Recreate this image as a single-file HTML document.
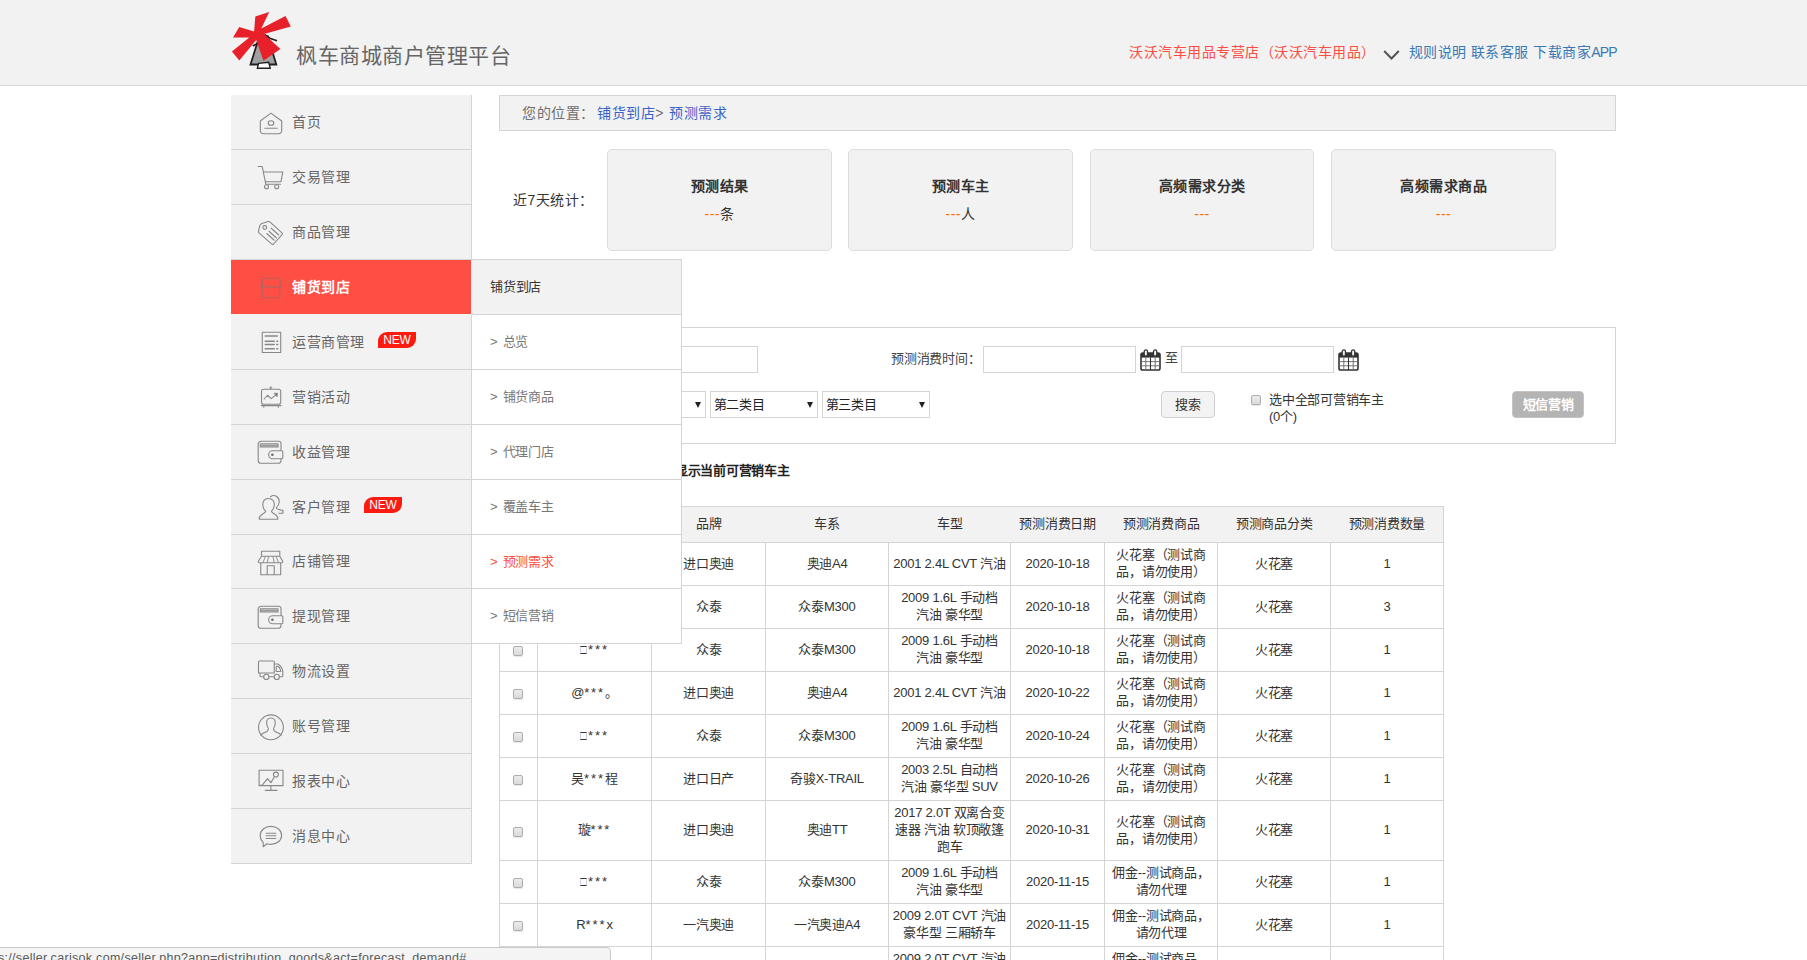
<!DOCTYPE html>
<html lang="zh-CN">
<head>
<meta charset="utf-8">
<title>枫车商城商户管理平台</title>
<style>
*{box-sizing:border-box;margin:0;padding:0}
html,body{width:1807px;height:960px;overflow:hidden;background:#fff}
body{font-family:"Liberation Sans",sans-serif;font-size:13px;letter-spacing:-.25px;color:#333;position:relative}
.abs{position:absolute}
/* header */
#hd{left:0;top:0;width:1807px;height:86px;background:#f2f2f2;border-bottom:1px solid #d5d5d5}
#logo{left:231px;top:10px;width:62px;height:62px}
#title{left:296px;top:41px;font-size:21px;line-height:30px;color:#666;letter-spacing:.5px;white-space:nowrap}
#shop{left:1129px;top:42px;font-size:14px;letter-spacing:.5px;line-height:20px;color:#ff4d42;white-space:nowrap}
#chev{left:1383px;top:48.500px;width:17px;height:12px}
#links{left:1408.500px;top:42px;font-size:14px;letter-spacing:.5px;line-height:20px;color:#3a78b5;white-space:nowrap}
#links i{font-style:normal;letter-spacing:-.9px}
/* sidebar */
#side{left:231px;top:95px;width:241px;border-right:1px solid #d5d5d5;background:#f2f2f2}
.mi{position:relative;height:55px;border-bottom:1px solid #d5d5d5;font-size:14px;letter-spacing:.5px;line-height:54px;color:#666;padding-left:61px;white-space:nowrap}
.mi.s54{height:54px;line-height:53px}
.mi svg.ic{position:absolute;left:25px;top:13px;width:30px;height:30px;overflow:visible}
.mi.on{background:#ff4e44;color:#fff;font-weight:bold;border-bottom-color:#f2f2f2}
.new{position:absolute;top:17px;width:38px;height:16px;background:#fc1b10;color:#fff;border-radius:9px 0 9px 0;font-size:12px;line-height:16px;text-align:center;font-weight:normal;letter-spacing:-.2px;padding-left:0}
/* submenu */
#sub{left:471px;top:259px;width:211px;border:1px solid #d5d5d5;background:#fff;font-size:13px;word-spacing:2px}
#sub div{height:55px;line-height:54px;border-bottom:1px solid #d5d5d5;padding-left:18px;color:#777;white-space:nowrap}
#sub div.h{background:#f2f2f2;color:#333;height:55px;margin-left:-1px;padding-left:19px}
#sub div.on{color:#ff4d42}
#sub div.s54{height:54px;line-height:53px}
#sub div:last-child{border-bottom:0;height:54px}
/* main */
#bc{left:499px;top:95px;width:1117px;height:36px;border:1px solid #d5d5d5;background:#f2f2f2;line-height:34px;padding-left:22px;font-size:14px;letter-spacing:.5px;color:#6e6e6e;white-space:nowrap}
#bc b{font-weight:normal;color:#3b62c8}
#bc u{text-decoration:none;display:inline-block;width:4.500px}
#stl{left:513px;top:190px;font-size:14px;letter-spacing:.5px;line-height:20px;color:#333;white-space:nowrap}
.card{position:absolute;top:149px;width:225px;height:102px;border:1px solid #dcdcdc;border-radius:5px;background:#f2f2f2;text-align:center;font-size:14px;letter-spacing:.5px}
.card .t{margin-top:26px;line-height:20px;font-weight:bold;color:#333}
.card .v{margin-top:8px;line-height:20px;color:#333}
.card .v i{font-style:normal;color:#ff6a00}
#flt{left:499px;top:327px;width:1117px;height:117px;border:1px solid #d5d5d5;background:#fff}
.inp{position:absolute;height:27px;border:1px solid #d4d4d4;background:#fff}
.sel{position:absolute;height:27px;border:1px solid #d4d4d4;background:#fff;font-size:13px;line-height:25px;padding-left:2.500px;color:#222;white-space:nowrap}
.sel:after{content:"";position:absolute;right:4.500px;top:9.500px;border:3.500px solid transparent;border-top:6px solid #222;border-bottom:0}
.lbl{position:absolute;font-size:13px;line-height:17px;color:#444;white-space:nowrap}
.btn{position:absolute;height:27px;border:1px solid #d0d0d0;border-radius:4px;background:#f3f3f3;font-size:13px;line-height:25px;text-align:center;color:#333;white-space:nowrap}
.cb{position:absolute;width:10px;height:10px;border:1px solid #adadad;border-radius:2px;background:linear-gradient(#ececec,#dadada);box-shadow:0 1px 1px rgba(0,0,0,.1)}
.cal{position:absolute;width:21px;height:23px}
/* table */
#tbl{left:499px;top:506px;border-collapse:collapse;table-layout:fixed;width:945px;font-size:13px;line-height:17px;color:#333;text-align:center}
#tbl td,#tbl th{border:1px solid #d5d5d5;padding:3px 0 5px;white-space:nowrap;font-weight:normal;vertical-align:middle;height:43px}
#tbl th{background:#f2f2f2;height:36px;border-left:0;border-right:0;padding:0 0 2px;white-space:nowrap}
#tbl th:first-child{border-left:1px solid #d5d5d5}
#tbl th:last-child{border-right:1px solid #d5d5d5}
#tbl td .cb{position:static;display:inline-block;vertical-align:middle;margin-top:2.500px;margin-right:2px}
#tbl .st{letter-spacing:1.900px}
.nb{display:inline-block;width:7px;height:8px;border:1px solid #333;border-left-color:#d0d0e0;border-right-color:#d0d0e0;margin-right:1px;vertical-align:0}
#tbl tr.r3 td{height:60px}
/* status */
#stat{left:-1px;top:947px;width:612px;height:20px;letter-spacing:.3px;border:1px solid #c9c9c9;border-radius:0 4px 0 0;background:#f4f4f4;font-size:12.500px;line-height:21px;color:#5a5a5a;white-space:nowrap;overflow:hidden;padding-left:0;text-indent:-2px}
</style>
</head>
<body>
<div id="hd" class="abs"></div>
<svg id="logo" class="abs" viewBox="0 0 62 62">
<polygon points="27.1,30.2 19.5,54.5 45.3,54.5 40.2,37.7 36.7,26.3" fill="#a0a0a0" stroke="#231f20" stroke-width="1.800" stroke-linejoin="miter"/>
<polygon points="27.6,53.4 37.7,52.3 39.2,58.2 26.4,58.2" fill="#fff" stroke="#231f20" stroke-width="1.400"/>
<polyline points="33.5,24.4 39.5,28.5 46.0,30.7" fill="none" stroke="#231f20" stroke-width="1.500"/>
<polyline points="21.8,36.1 27.1,32.9" fill="none" stroke="#231f20" stroke-width="1.700"/>
<polygon points="24.3,6.4 38.2,1.9 30.3,18.5 54.5,6.1 59.8,16.6 33.1,24.1 49.4,39.1 32.4,50.8 25.3,29.9 8.3,50.4 0.9,41.6 18.3,27.6 2.0,27.4 8.3,17.1 23.1,21.4" fill="#e8202a"/>
</svg>
<div id="title" class="abs">枫车商城商户管理平台</div>
<div id="shop" class="abs">沃沃汽车用品专营店（沃沃汽车用品）</div>
<svg id="chev" class="abs" viewBox="0 0 17 12"><path d="M1.200 2 L8.500 9.500 L15.800 2" fill="none" stroke="#555" stroke-width="2"/></svg>
<div id="links" class="abs">规则说明 联系客服 下载商家<i>APP</i></div>

<div id="side" class="abs">
<div class="mi"><svg class="ic" viewBox="0 0 30 30" fill="none" stroke="#888" stroke-width="1.100" stroke-linecap="round" stroke-linejoin="round"><path d="M4.300 13 L14.900 5.100 L25.700 13 V22.700 a3 3 0 0 1 -3 3 H7.300 a3 3 0 0 1 -3 -3 Z"/><ellipse cx="15" cy="15" rx="2.800" ry="2.300"/><path d="M8.800 20.300 H21.200"/></svg>首页</div>
<div class="mi"><svg class="ic" viewBox="0 0 30 30" fill="none" stroke="#888" stroke-width="1.100" stroke-linecap="round" stroke-linejoin="round"><path d="M2.200 3.500 H6.200 L9.800 21.200 H24.500 M7.400 9 H26.800 L25 18.700 H9.300"/><circle cx="10.500" cy="23.700" r="2"/><circle cx="20.700" cy="23.700" r="2"/></svg>交易管理</div>
<div class="mi"><svg class="ic" viewBox="0 0 30 30" fill="none" stroke="#888" stroke-width="1.100" stroke-linecap="round" stroke-linejoin="round"><path d="M5.300 5.800 L12 3.600 Q13.200 3.300 14.100 4.100 L26 14.800 Q26.900 15.700 26.100 16.600 L17.600 26 Q16.700 26.900 15.800 26.100 L3 14.800 Q2.200 14 2.500 13 L4 7.200 Q4.300 6.100 5.300 5.800 Z"/><circle cx="8.800" cy="9.500" r="1.900"/><path d="M15.250 10.250 L22.750 17 M13 13.250 L20.500 20 M10.750 15.500 L18.250 22.250"/></svg>商品管理</div>
<div class="mi on"><svg class="ic" viewBox="0 0 30 30" fill="none" stroke="#b8625d" stroke-width="1.200" stroke-linecap="round" stroke-linejoin="round"><path d="M6.250 5.250 H23.800 L25.300 12.750 V13.300 q-2.570 2.400 -5.140 0 q-2.570 2.400 -5.140 0 q-2.570 2.400 -5.140 0 q-2.570 2.400 -5.140 0 V12.750 Z M6.250 5.250 V13.800 M23.800 5.250 V13.800 M6.250 14.500 V24.750 H23.800 V14.500"/></svg>铺货到店</div>
<div class="mi"><svg class="ic" viewBox="0 0 30 30" fill="none" stroke="#888" stroke-width="1.100" stroke-linecap="round" stroke-linejoin="round"><rect x="6.250" y="4.250" width="18.450" height="20.250"/><path d="M9.250 8 H21.250 M9.250 13.250 H18.250 M9.250 16.550 H18.250 M9.250 20.750 H18.250 M20.700 13.250 H21.700 M20.700 16.550 H21.700 M20.700 20.750 H21.700" stroke-width="1.500"/></svg>运营商管理<span class="new" style="left:147px">NEW</span></div>
<div class="mi"><svg class="ic" viewBox="0 0 30 30" fill="none" stroke="#888" stroke-width="1.100" stroke-linecap="round" stroke-linejoin="round"><rect x="5.500" y="6.250" width="19.200" height="15" rx="2"/><path d="M14.800 4.300 V6.250 M13.900 4.300 H15.700 M5.200 22.600 H25 M7.750 22.600 V24.300 M22.300 22.600 V24.300"/><path d="M8.200 16 L11.500 12.250 L15.250 15.700 L20.500 11.300"/><path d="M18.200 10.300 L21.700 10.100 L21.100 13.600 Z" fill="#777" stroke-width=".6"/></svg>营销活动</div>
<div class="mi"><svg class="ic" viewBox="0 0 30 30" fill="none" stroke="#888" stroke-width="1.100" stroke-linecap="round" stroke-linejoin="round"><path d="M2.200 6 a2.800 2.800 0 0 1 2.800 -2.800 H23 a2 2 0 0 1 2 2 V22.450 a2.800 2.800 0 0 1 -2.800 2.800 H5 a2.800 2.800 0 0 1 -2.800 -2.800 Z"/><path d="M4.300 5.750 H22 V8.900 H4.300 Z" /><path d="M4.800 7.300 H21.500" stroke-width="1.600" stroke="#9a9a9a"/><path d="M26 12.800 H16.600 a3.950 3.950 0 0 0 0 7.900 H26 a.8 .8 0 0 0 .8 -.8 V13.600 a.8 .8 0 0 0 -.8 -.8 Z" fill="#f2f2f2"/><circle cx="16.400" cy="16.800" r="1.300" fill="#6a6a6a" stroke="none"/></svg>收益管理</div>
<div class="mi"><svg class="ic" viewBox="0 0 30 30" fill="none" stroke="#888" stroke-width="1.100" stroke-linecap="round" stroke-linejoin="round"><path d="M14.500 3.800 c3.500 -2.800 9 -.5 8.700 5.200 c-.2 3 -1.600 4.700 -2.900 5.800 c.3 1.300 2.300 2 6.600 2.600 V20.300 H22.800"/><path d="M12.200 5.500 c-3.800 0 -5.600 3 -5.400 6.500 c.2 3 1.500 5 2.900 6.200 c-.4 2.800 -6.300 2.400 -6.600 7.300 q0 .7 .8 .7 H21.200 q.8 0 .8 -.7 c-.3 -4.900 -6.200 -4.500 -6.600 -7.300 c1.400 -1.200 2.700 -3.200 2.900 -6.200 c.2 -3.500 -1.600 -6.500 -6.100 -6.500 Z" fill="#f2f2f2"/></svg>客户管理<span class="new" style="left:133px">NEW</span></div>
<div class="mi s54"><svg class="ic" viewBox="0 0 30 30" fill="none" stroke="#888" stroke-width="1.100" stroke-linecap="round" stroke-linejoin="round"><path d="M5.500 3.300 H23.800 V8.250 H5.500 Z M5.500 8.250 L2.300 13.300 q-.2 1.400 1.300 1.400 H25.400 q1.500 0 1.300 -1.400 L23.800 8.250 M4.750 14.700 V26.700 H24.700 V14.700 M11.200 26.700 V17.700 H18.250 V26.700"/><path d="M9.300 8.500 L7 14.500 M12.500 8.500 L11.300 14.500 M17 8.500 L18.200 14.500 M20.200 8.500 L22.500 14.500" stroke-width=".9"/></svg>店铺管理</div>
<div class="mi"><svg class="ic" viewBox="0 0 30 30" fill="none" stroke="#888" stroke-width="1.100" stroke-linecap="round" stroke-linejoin="round"><g transform="translate(0,1)"><path d="M2.200 6 a2.800 2.800 0 0 1 2.800 -2.800 H23 a2 2 0 0 1 2 2 V22.450 a2.800 2.800 0 0 1 -2.800 2.800 H5 a2.800 2.800 0 0 1 -2.800 -2.800 Z"/><path d="M4.300 5.750 H22 V8.900 H4.300 Z" /><path d="M4.800 7.300 H21.500" stroke-width="1.600" stroke="#9a9a9a"/><path d="M26 12.800 H16.600 a3.950 3.950 0 0 0 0 7.900 H26 a.8 .8 0 0 0 .8 -.8 V13.600 a.8 .8 0 0 0 -.8 -.8 Z" fill="#f2f2f2"/><circle cx="16.400" cy="16.800" r="1.300" fill="#6a6a6a" stroke="none"/></g></svg>提现管理</div>
<div class="mi"><svg class="ic" viewBox="0 0 30 30" fill="none" stroke="#888" stroke-width="1.100" stroke-linecap="round" stroke-linejoin="round"><path d="M3.500 4 H17.250 a1 1 0 0 1 1 1 V16 H2.500 V5 a1 1 0 0 1 1 -1 Z M18.250 7 H22 c2.800 1.800 4.800 5.500 4.800 8.500 V18.750 a1 1 0 0 1 -1 1 H4.900 a.9 .9 0 0 1 -.9 -.9 V16"/><path d="M20.200 9.250 H22.300 c1.300 1.300 2.300 3.300 2.600 5.250 H20.200 Z"/><circle cx="10.300" cy="19.900" r="2.600" fill="#f2f2f2"/><circle cx="20.800" cy="19.900" r="2.600" fill="#f2f2f2"/></svg>物流设置</div>
<div class="mi"><svg class="ic" viewBox="0 0 30 30" fill="none" stroke="#888" stroke-width="1.100" stroke-linecap="round" stroke-linejoin="round"><circle cx="14.950" cy="15.300" r="12.400"/><path d="M14.950 6 c-3.200 0 -4.500 2.300 -4.300 5.300 c.1 2.300 .8 4 1.700 5.200 c.2 2 -1 3 -3.600 4 c-2.100 .8 -3.300 1.500 -4.100 2.700 M14.950 6 c3.200 0 4.500 2.300 4.300 5.300 c-.1 2.300 -.8 4 -1.700 5.200 c-.2 2 1 3 3.600 4 c2.100 .8 3.300 1.500 4.100 2.700"/></svg>账号管理</div>
<div class="mi"><svg class="ic" viewBox="0 0 30 30" fill="none" stroke="#888" stroke-width="1.100" stroke-linecap="round" stroke-linejoin="round"><path d="M3.100 3.200 H27 V18.600 H3.100 Z M14.900 18.600 V23.400 M9.250 23.400 H21.100"/><path d="M3.300 18.400 H6 L11.500 11.600 L14.900 15.600 L18.100 10.300"/><circle cx="19.900" cy="7.600" r="2.500"/></svg>报表中心</div>
<div class="mi"><svg class="ic" viewBox="0 0 30 30" fill="none" stroke="#888" stroke-width="1.100" stroke-linecap="round" stroke-linejoin="round"><path d="M14.900 4.400 c6 0 10.700 4 10.700 9 s-4.700 9 -10.700 9 c-1.400 0 -2.800 -.2 -4 -.6 L7.200 24.700 V20.300 C5.300 18.600 4.200 16.200 4.200 13.400 C4.200 8.400 8.900 4.400 14.900 4.400 Z"/><path d="M10.150 11.200 H19.900 M10.150 13.800 H19.900 M10.150 16.500 H19.900"/></svg>消息中心</div>
</div>
<div id="bc" class="abs">您的位置：<u style="width:0;margin-left:-1.600px"></u> <b>铺货到店</b>&gt;<u style="width:.900px"></u> <b>预测需求</b></div>
<div id="stl" class="abs">近7天统计：</div>
<div class="card" style="left:607px"><div class="t">预测结果</div><div class="v"><i>---</i>条</div></div>
<div class="card" style="left:848px"><div class="t">预测车主</div><div class="v"><i>---</i>人</div></div>
<div class="card" style="left:1090px;width:224px"><div class="t">高频需求分类</div><div class="v"><i>---</i></div></div>
<div class="card" style="left:1331px"><div class="t">高频需求商品</div><div class="v"><i>---</i></div></div>
<div id="flt" class="abs"></div>
<div class="lbl" style="left:520px;top:351px">车主信息：</div>
<div class="inp" style="left:605px;top:346px;width:153px"></div>
<div class="lbl" style="left:891px;top:350px">预测消费时间：</div>
<div class="inp" style="left:983px;top:346px;width:153px"></div>
<svg class="cal" style="left:1140px;top:348px" viewBox="0 0 21 23"><rect x="1" y="5" width="19" height="17" rx="1.800" fill="#fff" stroke="#333" stroke-width="1.600"/><rect x="1" y="5" width="19" height="4.600" fill="#333"/><path d="M1 13.600 H20 M1 17.800 H20 M5.800 9.500 V22 M15.200 9.500 V22" stroke="#666" stroke-width=".9" fill="none"/><path d="M10.500 9.500 V22" stroke="#333" stroke-width="1.100"/><rect x="4.200" y="1.900" width="3.300" height="6.300" rx="1.650" fill="#f4f4f4" stroke="#333" stroke-width="1.300"/><rect x="13.500" y="1.900" width="3.300" height="6.300" rx="1.650" fill="#f4f4f4" stroke="#333" stroke-width="1.300"/></svg>
<div class="lbl" style="left:1165px;top:349px">至</div>
<div class="inp" style="left:1181px;top:346px;width:153px"></div>
<svg class="cal" style="left:1338px;top:348px" viewBox="0 0 21 23"><rect x="1" y="5" width="19" height="17" rx="1.800" fill="#fff" stroke="#333" stroke-width="1.600"/><rect x="1" y="5" width="19" height="4.600" fill="#333"/><path d="M1 13.600 H20 M1 17.800 H20 M5.800 9.500 V22 M15.200 9.500 V22" stroke="#666" stroke-width=".9" fill="none"/><path d="M10.500 9.500 V22" stroke="#333" stroke-width="1.100"/><rect x="4.200" y="1.900" width="3.300" height="6.300" rx="1.650" fill="#f4f4f4" stroke="#333" stroke-width="1.300"/><rect x="13.500" y="1.900" width="3.300" height="6.300" rx="1.650" fill="#f4f4f4" stroke="#333" stroke-width="1.300"/></svg>
<div class="lbl" style="left:520px;top:396px">商品分类：</div>
<div class="sel" style="left:598px;top:391px;width:108px">第一类目</div>
<div class="sel" style="left:710px;top:391px;width:108px">第二类目</div>
<div class="sel" style="left:822px;top:391px;width:108px">第三类目</div>
<div class="btn" style="left:1161px;top:391px;width:54px">搜索</div>
<div class="cb" style="left:1251px;top:395px"></div>
<div class="lbl" style="left:1269px;top:391px;color:#333">选中全部可营销车主<br>(0个)</div>
<div class="btn" style="left:1512px;top:391px;width:72px;background:#b4b4b4;border-color:#c4c4c4;color:#fff;font-weight:bold">短信营销</div>
<div class="cb" style="left:640px;top:465px"></div>
<div class="lbl" style="left:662px;top:462px;font-weight:bold;color:#222">只显示当前可营销车主</div>

<table id="tbl" class="abs"><colgroup><col style="width:38px"><col style="width:114px"><col style="width:114px"><col style="width:123px"><col style="width:122px"><col style="width:94px"><col style="width:113px"><col style="width:113px"><col style="width:113px"></colgroup>
<tr><th></th><th>车主</th><th>品牌</th><th>车系</th><th>车型</th><th>预测消费日期</th><th>预测消费商品</th><th>预测商品分类</th><th>预测消费数量</th></tr>
<tr><td><span class="cb"></span></td><td>O<span class="st">***</span>o</td><td>进口奥迪</td><td>奥迪A4</td><td>2001 2.4L CVT 汽油</td><td>2020-10-18</td><td>火花塞（测试商<br>品，请勿使用）</td><td>火花塞</td><td>1</td></tr>
<tr><td><span class="cb"></span></td><td><i class="nb"></i><span class="st">***</span></td><td>众泰</td><td>众泰M300</td><td>2009 1.6L 手动档<br>汽油 豪华型</td><td>2020-10-18</td><td>火花塞（测试商<br>品，请勿使用）</td><td>火花塞</td><td>3</td></tr>
<tr><td><span class="cb"></span></td><td><i class="nb"></i><span class="st">***</span></td><td>众泰</td><td>众泰M300</td><td>2009 1.6L 手动档<br>汽油 豪华型</td><td>2020-10-18</td><td>火花塞（测试商<br>品，请勿使用）</td><td>火花塞</td><td>1</td></tr>
<tr><td><span class="cb"></span></td><td>@<span class="st">***</span>。</td><td>进口奥迪</td><td>奥迪A4</td><td>2001 2.4L CVT 汽油</td><td>2020-10-22</td><td>火花塞（测试商<br>品，请勿使用）</td><td>火花塞</td><td>1</td></tr>
<tr><td><span class="cb"></span></td><td><i class="nb"></i><span class="st">***</span></td><td>众泰</td><td>众泰M300</td><td>2009 1.6L 手动档<br>汽油 豪华型</td><td>2020-10-24</td><td>火花塞（测试商<br>品，请勿使用）</td><td>火花塞</td><td>1</td></tr>
<tr><td><span class="cb"></span></td><td>吴<span class="st">***</span>程</td><td>进口日产</td><td>奇骏X-TRAIL</td><td>2003 2.5L 自动档<br>汽油 豪华型 SUV</td><td>2020-10-26</td><td>火花塞（测试商<br>品，请勿使用）</td><td>火花塞</td><td>1</td></tr>
<tr class="r3"><td><span class="cb"></span></td><td>璇<span class="st">***</span></td><td>进口奥迪</td><td>奥迪TT</td><td>2017 2.0T 双离合变<br>速器 汽油 软顶敞篷<br>跑车</td><td>2020-10-31</td><td>火花塞（测试商<br>品，请勿使用）</td><td>火花塞</td><td>1</td></tr>
<tr><td><span class="cb"></span></td><td><i class="nb"></i><span class="st">***</span></td><td>众泰</td><td>众泰M300</td><td>2009 1.6L 手动档<br>汽油 豪华型</td><td>2020-11-15</td><td>佣金--测试商品，<br>请勿代理</td><td>火花塞</td><td>1</td></tr>
<tr><td><span class="cb"></span></td><td>R<span class="st">***</span>x</td><td>一汽奥迪</td><td>一汽奥迪A4</td><td>2009 2.0T CVT 汽油<br>豪华型 三厢轿车</td><td>2020-11-15</td><td>佣金--测试商品，<br>请勿代理</td><td>火花塞</td><td>1</td></tr>
<tr><td><span class="cb"></span></td><td>R<span class="st">***</span>x</td><td>一汽奥迪</td><td>一汽奥迪A4</td><td>2009 2.0T CVT 汽油<br>豪华型 三厢轿车</td><td>2020-11-15</td><td>佣金--测试商品，<br>请勿代理</td><td>火花塞</td><td>1</td></tr>
</table>
<div id="sub" class="abs"><div class="h">铺货到店</div><div>&gt; 总览</div><div>&gt; 铺货商品</div><div>&gt; 代理门店</div><div>&gt; 覆盖车主</div><div class="on s54">&gt; 预测需求</div><div>&gt; 短信营销</div></div>
<div id="stat" class="abs">s://seller.carisok.com/seller.php?app=distribution_goods&amp;act=forecast_demand#</div>
</body>
</html>
